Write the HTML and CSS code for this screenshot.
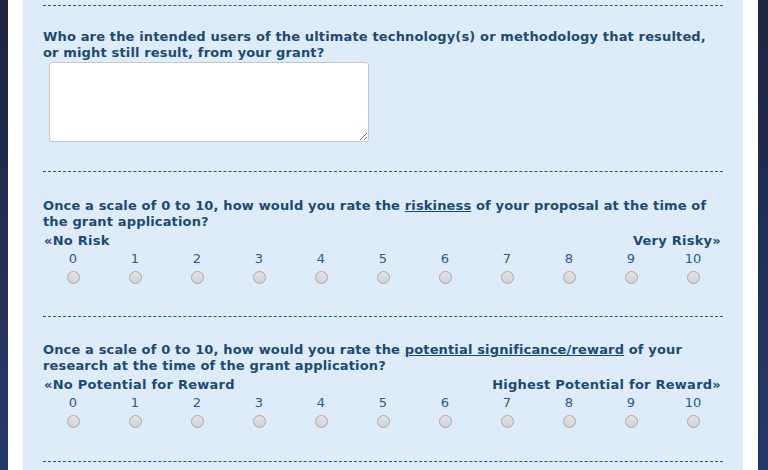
FILE: index.html
```html
<!DOCTYPE html>
<html lang="en">
<head>
    <meta charset="UTF-8">
    <meta name="viewport" content="width=device-width, initial-scale=1.0">
    <title>Grant Survey</title>
    <link rel="stylesheet" href="styles.css">
</head>
<body>
    <div class="page">
        <div class="survey">
            <div class="item item-first">
                <p class="question">Who are the intended users of the ultimate technology(s) or methodology that resulted, or might still result, from your grant?</p>
                <textarea name="users"></textarea>
            </div>

            <div class="item item-risk">
                <p class="question">Once a scale of 0 to 10, how would you rate the <u>riskiness</u> of your proposal at the time of the grant application?</p>
                <div class="scale-ends">
                    <span>&laquo;No Risk</span>
                    <span>Very Risky&raquo;</span>
                </div>
                <div class="scale">
                    <label>0<input type="radio" name="risk" value="0"></label>
                    <label>1<input type="radio" name="risk" value="1"></label>
                    <label>2<input type="radio" name="risk" value="2"></label>
                    <label>3<input type="radio" name="risk" value="3"></label>
                    <label>4<input type="radio" name="risk" value="4"></label>
                    <label>5<input type="radio" name="risk" value="5"></label>
                    <label>6<input type="radio" name="risk" value="6"></label>
                    <label>7<input type="radio" name="risk" value="7"></label>
                    <label>8<input type="radio" name="risk" value="8"></label>
                    <label>9<input type="radio" name="risk" value="9"></label>
                    <label>10<input type="radio" name="risk" value="10"></label>
                </div>
            </div>

            <div class="item">
                <p class="question">Once a scale of 0 to 10, how would you rate the <u>potential significance/reward</u> of your research at the time of the grant application?</p>
                <div class="scale-ends">
                    <span>&laquo;No Potential for Reward</span>
                    <span>Highest Potential for Reward&raquo;</span>
                </div>
                <div class="scale">
                    <label>0<input type="radio" name="reward" value="0"></label>
                    <label>1<input type="radio" name="reward" value="1"></label>
                    <label>2<input type="radio" name="reward" value="2"></label>
                    <label>3<input type="radio" name="reward" value="3"></label>
                    <label>4<input type="radio" name="reward" value="4"></label>
                    <label>5<input type="radio" name="reward" value="5"></label>
                    <label>6<input type="radio" name="reward" value="6"></label>
                    <label>7<input type="radio" name="reward" value="7"></label>
                    <label>8<input type="radio" name="reward" value="8"></label>
                    <label>9<input type="radio" name="reward" value="9"></label>
                    <label>10<input type="radio" name="reward" value="10"></label>
                </div>
            </div>

            <div class="item item-last"></div>
        </div>
    </div>
</body>
</html>
```

FILE: styles.css
```css
html {
    min-height: 100%;
    background: linear-gradient(#1d2540, #25396a);
}

body {
    margin: 0;
    font-family: "DejaVu Sans", Verdana, sans-serif;
    font-size: 13px;
    color: #1b4a75;
}

.page {
    width: 750px;
    margin-left: 8px;
    padding: 0 15px;
    box-sizing: border-box;
    background-color: #fff;
}

.survey {
    background-color: #deebf8;
    padding: 5px 20px 0;
}

.item {
    border-top: 1px dashed #1f5a8f;
    padding: 25px 0 33px;
}

.item-first {
    padding-top: 23px;
    padding-bottom: 29px;
}

.item-risk {
    padding-top: 26px;
    padding-bottom: 32px;
}

.item-last {
    padding: 0;
    height: 12px;
}

.question {
    margin: 0;
    font-weight: bold;
    line-height: 16px;
    letter-spacing: 0.15px;
}

.question u {
    text-decoration-thickness: 1px;
}

textarea {
    display: block;
    width: 320px;
    height: 80px;
    margin: 1px 0 0 6px;
    box-sizing: border-box;
    border: 1px solid #c6c6c6;
    border-radius: 3px;
    background-color: #fff;
    resize: both;
}

.scale-ends {
    display: flex;
    justify-content: space-between;
    margin-top: 3px;
    padding: 0 2px 0 1px;
    font-weight: bold;
    line-height: 16px;
    letter-spacing: 0.25px;
}

.scale {
    display: grid;
    grid-template-columns: repeat(11, 1fr);
    margin: 2px -1px 0;
}

.scale label {
    display: flex;
    flex-direction: column;
    align-items: center;
    gap: 4px;
    line-height: 16px;
    color: #2b5a8a;
}

.scale input[type="radio"] {
    appearance: none;
    width: 13px;
    height: 13px;
    margin: 0;
    border: 1px solid #a8a8a8;
    border-radius: 50%;
    background: linear-gradient(#e4e4e4, #d2d2d2);
}
```
